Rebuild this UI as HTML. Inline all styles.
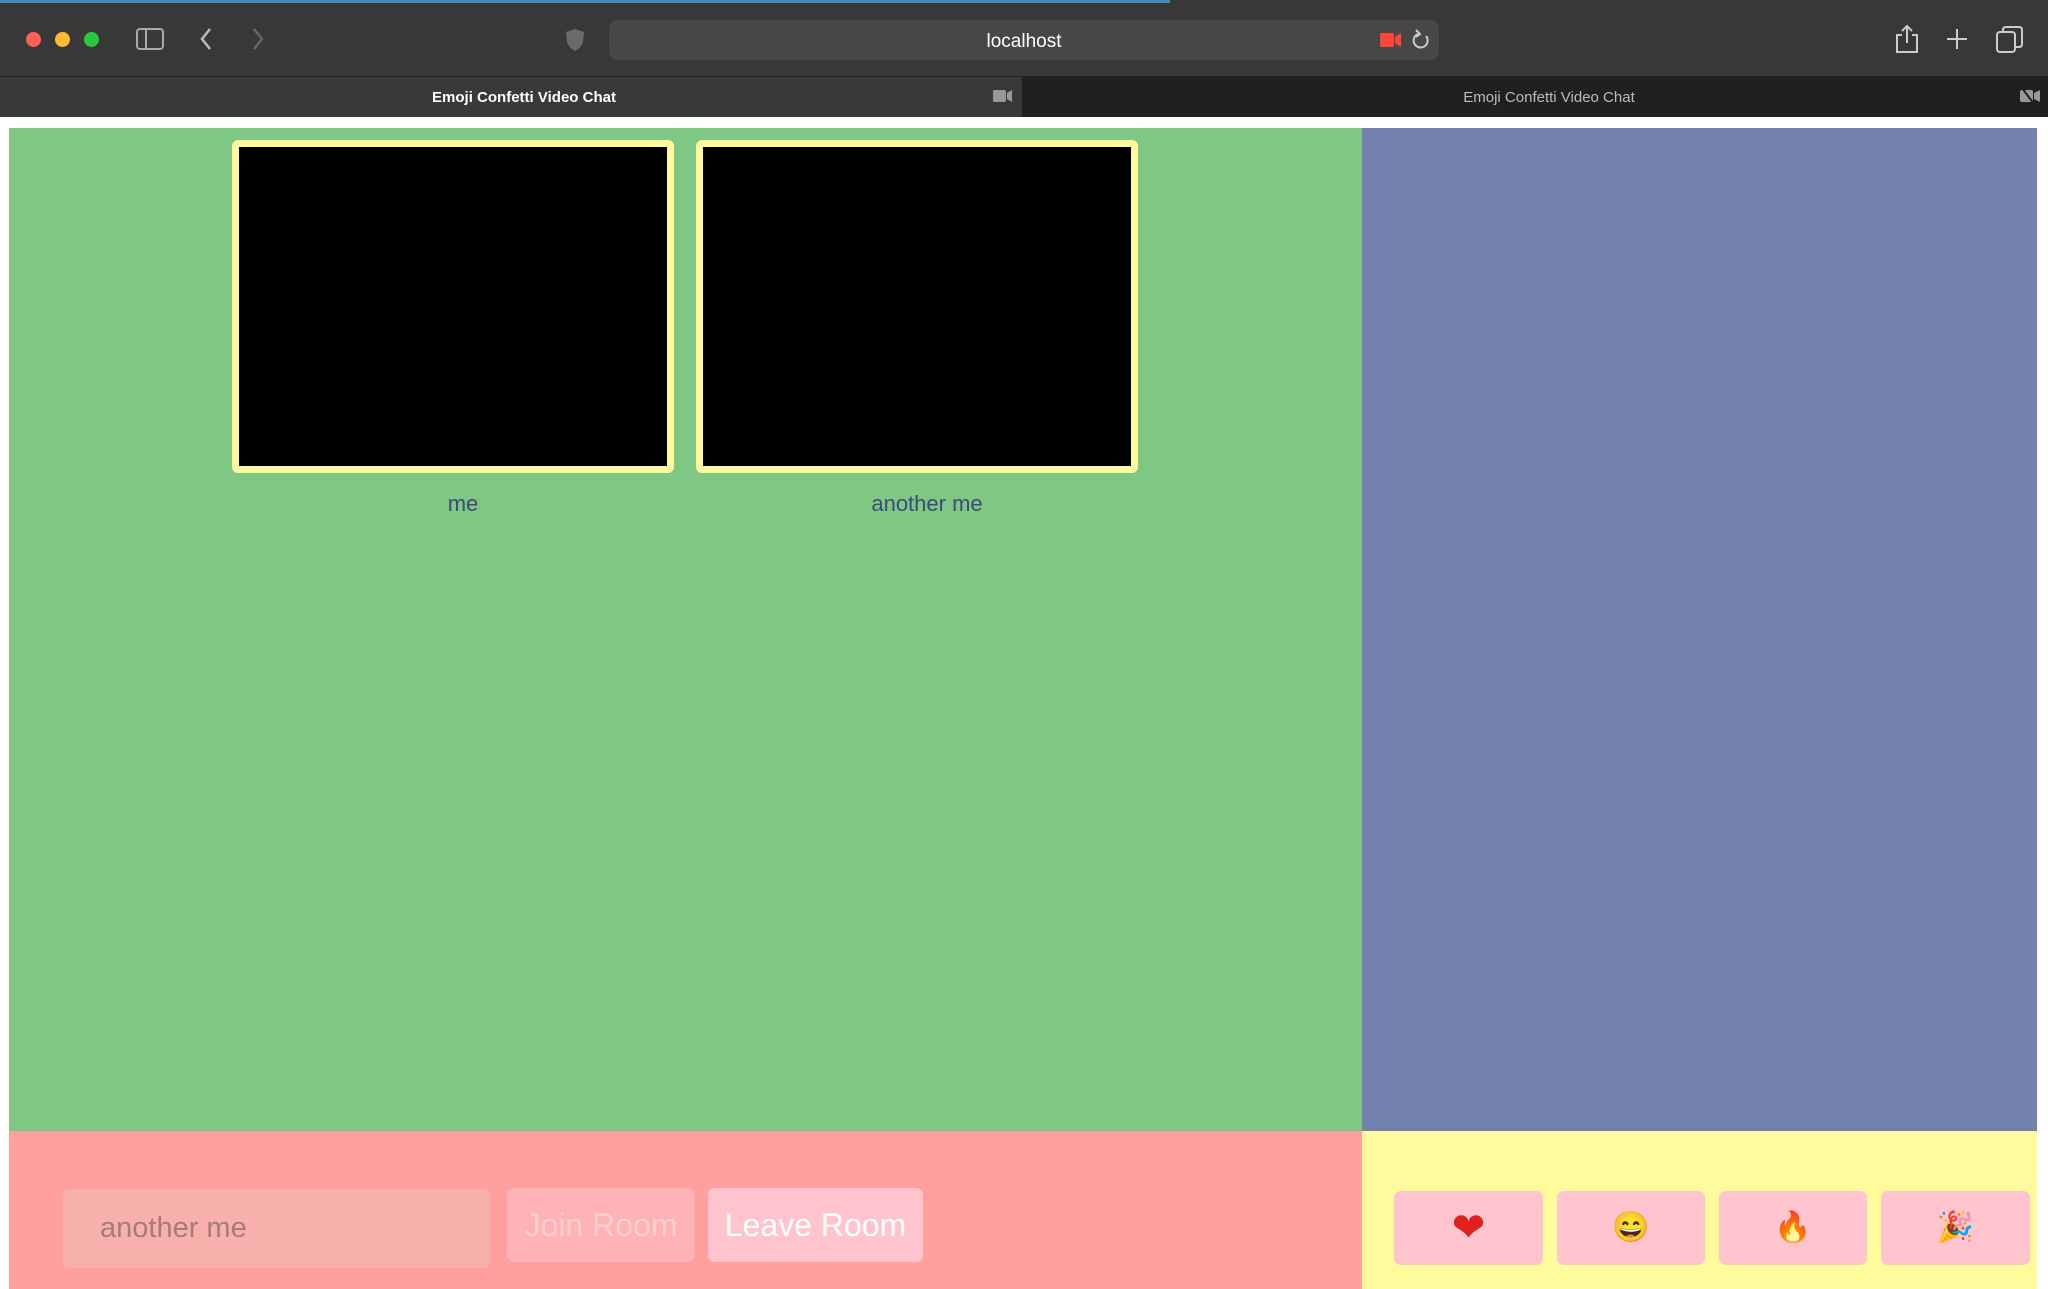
<!DOCTYPE html>
<html><head><meta charset="utf-8"><style>
*{margin:0;padding:0;box-sizing:border-box}
body{width:2048px;height:1289px;background:#fff;font-family:"Liberation Sans",sans-serif;position:relative;overflow:hidden}
.abs{position:absolute}
</style></head><body>
<div class="abs" style="left:0;top:0;width:2048px;height:77px;background:#383838"></div>
<div class="abs" style="left:0;top:0;width:1170px;height:3px;background:#3a8fb8"></div>
<div class="abs" style="left:26px;top:32px;width:15px;height:15px;border-radius:50%;background:#fe5f57"></div>
<div class="abs" style="left:55px;top:32px;width:15px;height:15px;border-radius:50%;background:#febc2e"></div>
<div class="abs" style="left:84px;top:32px;width:15px;height:15px;border-radius:50%;background:#28c840"></div>
<svg class="abs" style="left:136px;top:28px" width="28" height="22"><rect x="1" y="1" width="26" height="20" rx="3" fill="none" stroke="#aaa" stroke-width="2"/><line x1="10" y1="1" x2="10" y2="21" stroke="#aaa" stroke-width="2"/></svg>
<svg class="abs" style="left:198px;top:27px" width="16" height="24"><path d="M12 2 L4 12 L12 22" fill="none" stroke="#bbb" stroke-width="2.5"/></svg>
<svg class="abs" style="left:250px;top:27px" width="16" height="24"><path d="M4 2 L12 12 L4 22" fill="none" stroke="#666" stroke-width="2.5"/></svg>
<svg class="abs" style="left:565px;top:28px" width="20" height="24"><path d="M10 1 L19 4 L18 14 Q16 20 10 23 Q4 20 2 14 L1 4 Z" fill="#6a6a6a"/></svg>
<div class="abs" style="left:609px;top:20px;width:830px;height:40px;border-radius:9px;background:#474747"></div>
<div class="abs" style="left:609px;top:31px;width:830px;text-align:center;color:#fff;font-size:19px">localhost</div>
<svg class="abs" style="left:1380px;top:32px" width="22" height="16"><rect x="0" y="1" width="14" height="14" rx="2" fill="#ff453a"/><path d="M15 5 L21 1 L21 15 L15 11Z" fill="#ff453a"/></svg>
<svg class="abs" style="left:1410px;top:28px" width="22" height="24"><path d="M16 8 A7 7 0 1 1 8 6" fill="none" stroke="#ccc" stroke-width="2"/><path d="M6 2 L10 6 L6 9" fill="none" stroke="#ccc" stroke-width="2"/></svg>
<svg class="abs" style="left:1894px;top:24px" width="26" height="30"><path d="M8 11 H3 V28 H23 V11 H18" fill="none" stroke="#ccc" stroke-width="2"/><path d="M13 2 V19 M8 7 L13 2 L18 7" fill="none" stroke="#ccc" stroke-width="2"/></svg>
<svg class="abs" style="left:1946px;top:28px" width="22" height="22"><path d="M11 1 V21 M1 11 H21" stroke="#ccc" stroke-width="2"/></svg>
<svg class="abs" style="left:1996px;top:26px" width="28" height="28"><rect x="1" y="6" width="18" height="20" rx="3" fill="none" stroke="#ccc" stroke-width="2"/><path d="M7 6 V4 Q7 1 10 1 H23 Q26 1 26 4 V18 Q26 21 23 21 H19" fill="none" stroke="#ccc" stroke-width="2"/></svg>
<div class="abs" style="left:0;top:77px;width:1022px;height:40px;background:#393939"></div>
<div class="abs" style="left:1022px;top:77px;width:1026px;height:40px;background:#1f2020"></div>
<div class="abs" style="left:0;top:76px;width:2048px;height:1px;background:#222"></div>
<div class="abs" style="left:0;top:89px;width:1048px;text-align:center;color:#fff;font-size:15px;font-weight:bold">Emoji Confetti Video Chat</div>
<div class="abs" style="left:1022px;top:89px;width:1054px;text-align:center;color:#bbb;font-size:15px">Emoji Confetti Video Chat</div>
<svg class="abs" style="left:993px;top:89px" width="20" height="14"><rect x="0" y="1" width="13" height="12" rx="2" fill="#999"/><path d="M14 4 L19 1 L19 13 L14 10Z" fill="#999"/></svg>
<svg class="abs" style="left:2020px;top:88px" width="22" height="16"><rect x="0" y="2" width="13" height="12" rx="2" fill="#999"/><path d="M14 5 L20 2 L20 14 L14 11Z" fill="#999"/><line x1="2" y1="0" x2="14" y2="16" stroke="#1f2020" stroke-width="2"/></svg>
<div class="abs" style="left:0;top:117px;width:2048px;height:11px;background:#fff"></div>

<div class="abs" style="left:9px;top:128px;width:1353px;height:1003px;background:#7fc883"></div>
<div class="abs" style="left:1362px;top:128px;width:675px;height:1003px;background:#7480ad"></div>
<div class="abs" style="left:232px;top:140px;width:442px;height:333px;border:7px solid #fffa9c;border-radius:6px;background:#000"></div>
<div class="abs" style="left:696px;top:140px;width:442px;height:333px;border:7px solid #fffa9c;border-radius:6px;background:#000"></div>
<div class="abs" style="left:232px;top:491px;width:462px;text-align:center;color:#3d4a7a;font-size:22px">me</div>
<div class="abs" style="left:696px;top:491px;width:462px;text-align:center;color:#3d4a7a;font-size:22px">another me</div>

<div class="abs" style="left:9px;top:1131px;width:1353px;height:158px;background:#ff9f9e"></div>
<div class="abs" style="left:1362px;top:1131px;width:675px;height:158px;background:#fffa9c"></div>
<div class="abs" style="left:63px;top:1189px;width:427px;height:79px;border-radius:6px;background:#f8b0ad;color:#a87a7a;font-size:29px;padding:23px 0 0 37px">another me</div>
<div class="abs" style="left:507px;top:1188px;width:188px;height:74px;border-radius:7px;background:#ffb3b7;color:#ffcfd2;font-size:32px;text-align:center;line-height:74px">Join Room</div>
<div class="abs" style="left:708px;top:1188px;width:215px;height:74px;border-radius:7px;background:#ffc4ce;color:#fff;font-size:32px;text-align:center;line-height:74px">Leave Room</div>
<div class="abs" style="left:1394px;top:1191px;width:149px;height:74px;border-radius:7px;background:#ffc4ce;text-align:center;line-height:74px;font-size:40px;color:#e0201c">❤</div>
<div class="abs" style="left:1557px;top:1191px;width:148px;height:74px;border-radius:7px;background:#ffc4ce;text-align:center;line-height:74px;font-size:30px;color:#e9a10a">😄</div>
<div class="abs" style="left:1719px;top:1191px;width:148px;height:74px;border-radius:7px;background:#ffc4ce;text-align:center;line-height:74px;font-size:30px;color:#f06010">🔥</div>
<div class="abs" style="left:1881px;top:1191px;width:149px;height:74px;border-radius:7px;background:#ffc4ce;text-align:center;line-height:74px;font-size:30px;color:#c9a030">🎉</div>
</body></html>
